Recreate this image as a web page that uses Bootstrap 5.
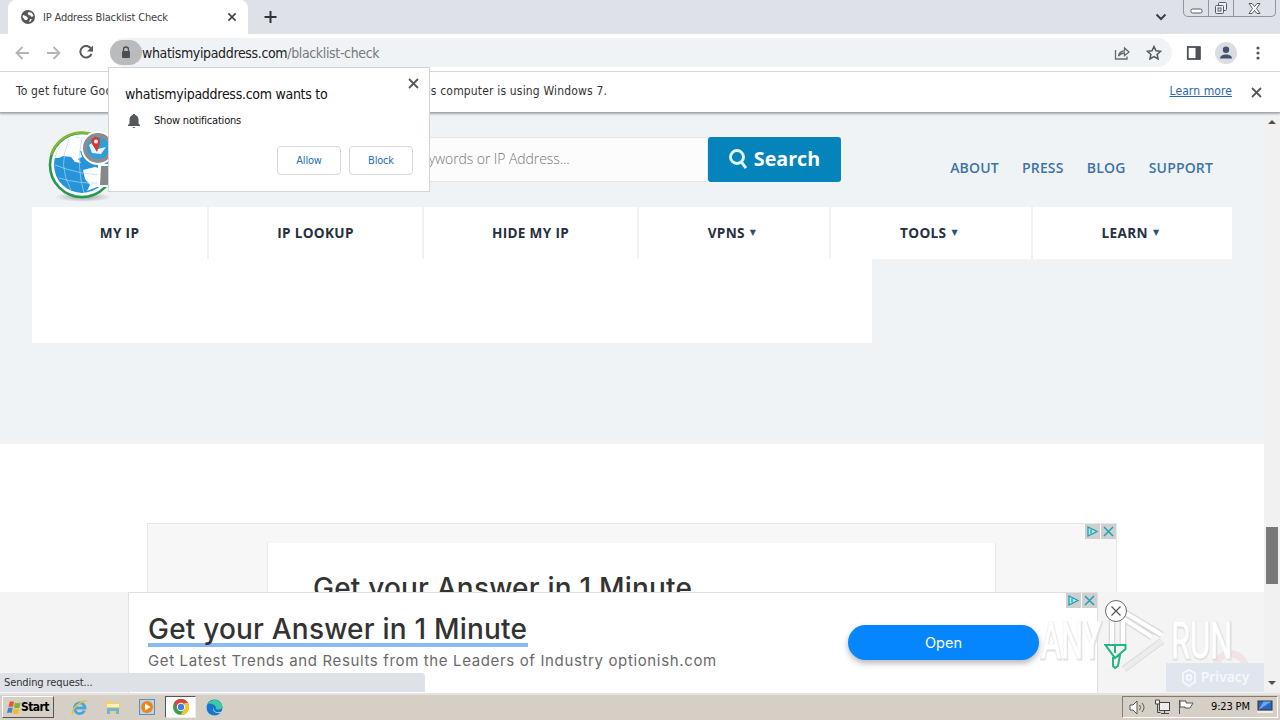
<!DOCTYPE html>
<html lang="en">
<head>
<meta charset="utf-8">
<meta name="viewport" content="width=device-width, initial-scale=1">
<title>IP Address Blacklist Check</title>
<link href="https://cdn.jsdelivr.net/npm/bootstrap@5.3.0/dist/css/bootstrap.min.css" rel="stylesheet">
<style>
body{width:1280px;height:720px;overflow:hidden;font-family:"Open Sans","Noto Sans",sans-serif;background:#fff;color:#222;line-height:1.2}
svg{display:block;flex:none}
a{text-decoration:none}
.chrome-ui{font-family:"DejaVu Sans Condensed","DejaVu Sans",sans-serif;font-stretch:condensed}
.tabstrip{height:34px;background:#dee1e8}
.tab-item{width:240px;height:34px;margin-left:8px;background:#fff;border-radius:8px 8px 0 0;padding:0 11px 0 13px;font-size:11px;color:#3c4043}
.tab-item span{letter-spacing:-.18px;padding-top:1px}
.tab-caret{margin-right:16px}
.caption-btns{width:93px;height:17px;margin-right:4px;border:1px solid #9195a0;border-top:0;border-radius:0 0 5px 5px}
.caption-btns>div{display:flex;justify-content:center;align-items:center;border-right:1px solid #9195a0}
.caption-btns>div:last-child{border:0}
.toolbar-row{height:38px;border-bottom:1px solid #d8dadd}
.omnibox{height:29px;width:1062px;background:#f0f3f5;border-radius:15px;margin-left:16px;font-size:14px;color:#77797d}
.lockchip{width:32px;height:25px;background:#b9bbbd;border-radius:13px}
.omnibox b{font-weight:400;color:#202124}
.omnibox .addr{letter-spacing:-.35px;padding-top:1px}
.infobar{height:41px;border-bottom:1px solid #a5a9ad;box-shadow:0 1px 2px #a5a9ad;position:relative;background:#fff;font-size:12px;color:#333;padding:0 18px 2px 16px}
.infobar .msg{letter-spacing:.17px}
.infobar a{color:#2a65b5;text-decoration:underline;letter-spacing:.1px}
.viewport{height:580px}
.page-area{width:1264px;height:580px;background:#fff;overflow:hidden}
.page-top{height:331px;background:#f0f3f5}
.site-head{height:94px;padding:0 51px 2px 47px}
.site-logo{margin-top:13px}
.search-box{width:393px;height:45px;margin-left:200px;background:#fcfcfc;border:1px solid #e4e6e8;font-size:14px;color:#77797b;font-weight:300;letter-spacing:-.08px}
.search-box span{margin-left:60px}
.search-btn{width:133px;height:45px;background:#0484bb;border-radius:3px;color:#fff;font-weight:700;font-size:19.7px}
.site-links{font-size:14px;font-weight:600;gap:23.300px;letter-spacing:.15px;padding-top:18px}
.site-links a{color:#3f73a5}
.site-menu{width:1200px;height:52px;margin-left:32px;background:#fff;font-size:13.600px;font-weight:700;color:#26303f;letter-spacing:.32px}
.site-menu>div{border-right:2px solid #f0f2f4;display:flex;align-items:center;justify-content:center}
.site-menu>div:last-child{border:0}
.site-menu i{font-style:normal;font-size:8px;color:#2e536f;margin:0 4px 0 5px;font-family:"DejaVu Sans",sans-serif}
.site-panel{width:840px;height:84px;margin-left:32px;background:#fff}
.ad-one{width:970px;height:100px;margin:79px 0 0 147px;background:#f7f7f7;border:1px solid #e6e6e6}
.ad-one-card{width:729px;height:90px;margin:18px 0 0 119px;background:#fff;border:1px solid #e9e9e9;border-top-color:#f4f4f4;padding:28px 0 0 45px}
.ad-title{font-family:"Inter","Lato",sans-serif;font-size:28px;font-weight:500;color:#333;line-height:34px;letter-spacing:.2px;white-space:nowrap}
.ad-marks{top:0;right:0;gap:1px}
.ad-marks svg{background:#cfcfcf}
.ad-two{left:0;top:592px;width:1264px;height:101px;background:#f4f4f4}
.ad-two-card{width:970px;height:101px;margin-left:128px;background:#fff;border:1px solid #e0e0e0;border-bottom:0;padding:20px 0 0 19px}
.ad-two .ad-title{border-bottom:4px solid #8abaf2;line-height:33px;height:34px;width:380px}
.ad-sub{font-family:"Inter",sans-serif;font-size:15px;color:#6a6a6a;line-height:20px;margin-top:4px;letter-spacing:.64px}
.open-btn{left:719px;top:32px;width:191px;height:35px;border-radius:18px;background:#0586fe;color:#fff;font-family:"Inter",sans-serif;font-size:14.500px;box-shadow:0 3px 6px rgba(0,0,0,.3)}
.scroll-col{width:16px;background:#f1f1f1;padding:6px 0 7px}
.scroll-thumb{width:12px;height:57px;background:#797979;margin-bottom:97px}
.perm-pop{left:108px;top:67px;width:322px;height:125px;background:#fff;border:1px solid #d2d4d6;color:#111}
.perm-pop .title-line{font-size:14px;letter-spacing:-.28px;padding:18px 0 0 16px;line-height:17px}
.perm-pop .perm-line{font-size:11px;padding:10px 0 0 18px;letter-spacing:-.2px}
.perm-btn{width:64px;height:29px;border:1px solid #d5d8dc;border-radius:4px;color:#2070ba;font-size:11px;letter-spacing:-.2px}
.status-bub{left:0;top:673px;width:425px;height:19px;background:#dee1e8;border-radius:0 4px 0 0;font-size:11px;padding:1px 0 0 4px;color:#333;letter-spacing:-.1px}
.taskbar-row{height:27px;background:#d6cfc6;border-top:2px solid #e6e3de;padding:0 2px 1px 2px}
.start-btn{width:52px;height:22px;background:#d6cfc6;border:1px solid #fff;border-right-color:#555;border-bottom-color:#555;font-size:12px;font-weight:700;color:#000;letter-spacing:-.6px}
.task-active{width:31px;height:22px;background:#fff;border:1px solid #555;border-right-color:#eee;border-bottom-color:#eee}
.tray-box{width:156px;height:22px;border:1px solid #807c76;border-right-color:#fff;border-bottom-color:#fff;font-size:11px;color:#000}
.wmark{left:1040px;top:608px;width:210px;height:66px}
.privacy{left:1166px;top:663px;width:98px;height:29px;background:#dfe6ee;color:#f7f9fb;font-size:14px;font-weight:600}
</style>
</head>
<body class="position-relative">
<div class="tabstrip chrome-ui d-flex">
  <div class="tab-item d-flex align-items-center">
    <svg width="14" height="14" viewBox="0 0 14 14"><circle cx="7" cy="7" r="7" fill="#55585c"/><path d="M2 5l3 1 2 2-1 2H4L1.500 7zM8 2l3 1 1.500 3-2 1-1-1.500-2-.5-1-2zM9 9l2 .3-1.500 2.200L8 12z" fill="#fff"/></svg>
    <span class="ms-2 flex-grow-1">IP Address Blacklist Check</span>
    <svg width="10" height="10" viewBox="0 0 11 10" stroke="#3c4043" stroke-width="1.700"><path d="M1.500 1l8 8M9.500 1l-8 8"/></svg>
  </div>
  <svg class="ms-3 mt-2" width="13" height="17" viewBox="0 0 13 17" stroke="#333" stroke-width="2"><path d="M6.500 3v12M.5 9h12"/></svg>
  <svg class="tab-caret ms-auto" width="12" height="34" viewBox="0 0 12 34" fill="none" stroke="#3c4043" stroke-width="2"><path d="M1.500 14.500l4.500 4.500 4.500-4.500"/></svg>
  <div class="caption-btns d-flex">
    <div style="width:25px"><svg width="13" height="14"><rect x="1" y="8" width="11" height="4" rx="1.500" fill="#fff" stroke="#555b66"/></svg></div>
    <div style="width:25px"><svg width="14" height="14" fill="#eee" stroke="#555b66"><rect x="4.500" y="1.500" width="8" height="8" rx="1"/><rect x="1.500" y="4.500" width="8" height="8" rx="1"/><rect x="4" y="7" width="3" height="3"/></svg></div>
    <div class="flex-grow-1"><svg width="13" height="13" fill="#fff" stroke="#555b66"><path d="M1 1.500h3l2.500 3 2.500-3h3L8.500 6.500 12 11.500H9L6.500 8.500 4 11.500H1l3.500-5z"/></svg></div>
  </div>
</div>
<div class="toolbar-row chrome-ui d-flex align-items-center">
  <svg style="margin-left:15px" width="14" height="14" fill="none" stroke="#b3b5b8" stroke-width="1.800"><path d="M14 7H1.500M7.500 1l-6 6 6 6"/></svg>
  <svg style="margin-left:18px" width="14" height="14" fill="none" stroke="#b3b5b8" stroke-width="1.800"><path d="M0 7h12.500M6.500 1l6 6-6 6"/></svg>
  <svg style="margin-left:18px" width="15" height="15" fill="none" stroke="#55585c" stroke-width="2"><path d="M12 3.500A5.800 5.800 0 1 0 12.500 9"/><path d="M14 .5v6H8z" fill="#55585c" stroke="none"/></svg>
  <div class="omnibox d-flex align-items-center">
    <div class="lockchip d-flex align-items-center justify-content-center"><svg width="10" height="13"><rect x="1" y="5" width="8" height="7" rx="1" fill="#4c4f52"/><path d="M2.500 5V3.500a2.500 2.500 0 0 1 5 0V5" fill="none" stroke="#4c4f52" stroke-width="1.300"/></svg></div>
    <span class="addr flex-grow-1"><b>whatismyipaddress.com</b>/blacklist-check</span>
    <svg width="16" height="14" fill="none" stroke="#66696d" stroke-width="1.300"><path d="M1.500 4v9h11.500v-2.500M4.500 10c.5-3.500 2.500-5 6-5.200V2L15 6l-4.500 3.700V7C8 7 6 8 4.500 10z"/></svg>
    <svg style="margin:0 10px 0 16px" width="16" height="15" fill="none" stroke="#55585c" stroke-width="1.500"><path d="M8 1.500l2 4.300 4.500.5-3.400 3.100 1 4.600L8 11.700 3.900 14l1-4.600L1.500 6.300l4.500-.5z"/></svg>
  </div>
  <svg style="margin-left:14px" width="16" height="14"><rect x="1.800" y="1" width="12" height="12" fill="#fff" stroke="#4d5054" stroke-width="1.800"/><path d="M9.500 1h5v12h-5z" fill="#4d5054"/></svg>
  <svg style="margin-left:13px" width="22" height="22"><circle cx="11" cy="11" r="11" fill="#d9dce3"/><circle cx="11" cy="7.800" r="3.200" fill="#46506c"/><path d="M5 16.500c0-5.300 12-5.300 12 0z" fill="#46506c"/></svg>
  <svg style="margin-left:19px" width="4" height="14" fill="#55585c"><circle cx="2" cy="2" r="1.600"/><circle cx="2" cy="7" r="1.600"/><circle cx="2" cy="12" r="1.600"/></svg>
</div>
<div class="infobar chrome-ui d-flex align-items-center">
  <span class="msg flex-grow-1">To get future Google Chrome updates, you'll need Windows 10 or later. This computer is using Windows 7.</span>
  <a href="#">Learn more</a>
  <svg style="margin:2px 0 0 19px" width="11" height="11" stroke="#55585c" stroke-width="1.800"><path d="M1 1l9 9M10 1l-9 9"/></svg>
</div>
<div class="viewport d-flex">
  <div class="page-area">
    <div class="page-top">
      <div class="site-head d-flex align-items-center">
        <svg class="site-logo" width="68" height="72" viewBox="0 0 68 72">
          <defs><radialGradient id="shade"><stop offset="0" stop-color="#9da0a1"/><stop offset="1" stop-color="#f0f3f5"/></radialGradient></defs>
          <ellipse cx="36" cy="67" rx="28" ry="5" fill="url(#shade)"/>
          <circle cx="35" cy="35" r="32" fill="#fff" stroke="#25984f" stroke-width="2.600"/>
          <path d="M4 25A32 32 0 0 1 62 18" fill="none" stroke="#85b63a" stroke-width="2.600"/>
          <circle cx="35" cy="35" r="28" fill="#2793d8"/>
          <path d="M8 28C13 12 23 7 36 7c7 0 10 3 9 6l-5 7-7 1 2 6-4 2 3 4-6-1-4-5-8-1-4 2zM36 40l12-3 12 4-5 14-15 6 3-6-5-6z" fill="#fff"/>
          <path d="M8 35q25 10 50 10M12 48q20 6 42 5M22 10q-12 25 2 50M35 7q-6 30 2 56" stroke="#a5d5f2" stroke-width=".7" fill="none"/>
          <circle cx="51" cy="18" r="17" fill="#fff"/><circle cx="51" cy="18" r="13" fill="#2e9fd8" stroke="#8c8c90" stroke-width="4"/>
          <path d="M42 15l6-4 3 8 8-2-5 7-9-1z" fill="#e9f5fb"/>
          <path d="M50 22l-5-8a4.500 4.500 0 1 1 8-1z" fill="#d43b30"/><circle cx="49" cy="11.500" r="2" fill="#fff"/>
          <path d="M51 34h10v23H50z" fill="#fff"/><path d="M54 36h8v19h-9z" fill="#87888a"/>
        </svg>
        <div class="search-box d-flex align-items-center"><span>Enter Keywords or IP Address...</span></div>
        <div class="search-btn d-flex align-items-center justify-content-center">
          <svg style="margin-right:7px" width="18" height="21" fill="none" stroke="#e2f6ff" stroke-width="2.900"><circle cx="8" cy="8" r="6.500"/><path d="M12 12.500l5 6.500"/></svg>Search
        </div>
        <div class="site-links d-flex ms-auto"><a href="#">ABOUT</a><a href="#">PRESS</a><a href="#">BLOG</a><a href="#">SUPPORT</a></div>
      </div>
      <div class="site-menu d-flex">
        <div style="width:177px">MY IP</div><div style="width:215px">IP LOOKUP</div><div style="width:215px">HIDE MY IP</div><div style="width:192px">VPNS<i>▼</i></div><div style="width:202px">TOOLS<i>▼</i></div><div style="width:199px">LEARN<i>▼</i></div>
      </div>
      <div class="site-panel"></div>
    </div>
    <div class="ad-one position-relative">
      <div class="ad-marks position-absolute d-flex">
        <svg width="15" height="15" fill="#bfe3e8" stroke="#18a5b5" stroke-width="1.300"><path d="M3 3v9l9-4.500zM6 5.500v4"/></svg>
        <svg width="15" height="15" stroke="#18a5b5" stroke-width="1.500"><path d="M3 3l9 9M12 3l-9 9"/></svg>
      </div>
      <div class="ad-one-card"><div class="ad-title">Get your Answer in 1 Minute</div></div>
    </div>
  </div>
  <div class="scroll-col chrome-ui d-flex flex-column align-items-center">
    <svg width="8" height="5"><path d="M0 5l4-4 4 4z" fill="#505050"/></svg>
    <div class="scroll-thumb mt-auto"></div>
    <svg width="8" height="5"><path d="M0 0l4 4 4-4z" fill="#505050"/></svg>
  </div>
</div>
<div class="taskbar-row chrome-ui d-flex align-items-center">
  <div class="start-btn d-flex align-items-center">
    <svg class="ms-1" width="14" height="15" viewBox="0 0 14 15"><path d="M2.500 2Q5 .5 7 2L6 7Q4 6 1.500 7z" fill="#e5592c"/><path d="M8 2.500q3 1 5.500 0L12.500 7.500q-3 1-5.500 0z" fill="#7cb33a"/><path d="M1.200 8q2.500-1 4.500 0l-1 5Q3 12 0 13z" fill="#3f84d0"/><path d="M6.800 8.500q2.500 1 5.500 0l-1 5q-3 1-5.500 0z" fill="#f3b927"/></svg>
    <span>Start</span>
  </div>
  <svg style="margin-left:17px" width="17" height="17"><path d="M13.500 11.500A5.300 5.300 0 1 1 14 9H5" fill="none" stroke="#45a7e0" stroke-width="2.800"/><path d="M2 15.500C-1 12 9 1 16 2" stroke="#e8c13f" stroke-width="1.500" fill="none"/></svg>
  <svg style="margin-left:17px" width="16" height="16"><path d="M1 2h6l1 2h7v10H1z" fill="#efcf72"/><path d="M2 5h12v3H2z" fill="#fff3bd"/><path d="M2 15V9h12v6h-3v-3H5v3z" fill="#6eb4dc"/></svg>
  <svg style="margin-left:18px" width="16" height="16"><rect x=".5" y=".5" width="15" height="15" fill="#b9d4e8" stroke="#5d90b9"/><circle cx="8" cy="8" r="6" fill="#f08418"/><path d="M6 4.500v7L11.500 8z" fill="#fff"/></svg>
  <div class="task-active d-flex align-items-center justify-content-center" style="margin-left:10px">
    <svg width="16" height="16" viewBox="0 0 16 16"><circle cx="8" cy="8" r="8" fill="#3aa04e"/><path d="M1 4a8 8 0 0 1 14 0H8L4.500 10z" fill="#de4436"/><path d="M15 4a8 8 0 0 1-7.500 12l4-6V4z" fill="#f8c727"/><circle cx="8" cy="8" r="4.200" fill="#fff"/><circle cx="8" cy="8" r="3.200" fill="#3f7fe8"/></svg>
  </div>
  <svg style="margin-left:10px" width="17" height="17" viewBox="0 0 17 17"><circle cx="8.500" cy="8.500" r="8" fill="#1478cf"/><path d="M2 5C5-1 15 0 16.500 7c0 4-4 4-6.500 3 1-3-3-6-8-5z" fill="#3ccba0"/><path d="M7.500 9c0 4 4 5 8.500 3.500l-1 1.500c-5 1-9-2-7.500-5z" fill="#d6cfc6"/></svg>
  <div class="tray-box ms-auto d-flex align-items-center">
    <svg style="margin-left:6px" width="17" height="15" fill="#fff" stroke="#555"><path d="M1 5h3l4-4v13l-4-4H1z"/><path d="M10.500 5q2 2.500 0 5M13 3q4 4.500 0 9" fill="none"/></svg>
    <svg style="margin-left:8px" width="16" height="16" fill="#eee" stroke="#444"><rect x="5.500" y="3.500" width="10" height="8"/><path d="M1.500 1v4h4V1z"/><path d="M3.500 5v8.500h3M7 14.500h8M10.500 12v2" fill="none"/></svg>
    <svg style="margin-left:8px" width="16" height="16" fill="#fff" stroke="#555"><path d="M1.500 1v14M2 2h6v2h7l-3 5H7V8H2z"/></svg>
    <span style="margin-left:17px;letter-spacing:-.15px">9:23 PM</span>
    <svg class="ms-auto me-1" width="16" height="14"><rect x="1" y="1" width="14" height="9" fill="#2866c4" stroke="#333"/><path d="M1.500 10L14.500 1.500h-8z" fill="#6fa5e8"/><path d="M0 12h16" stroke="#eee" stroke-width="2"/></svg>
  </div>
</div>

<div class="ad-two position-absolute">
  <div class="ad-two-card position-relative">
    <div class="ad-title">Get your Answer in 1 Minute</div>
    <div class="ad-sub">Get Latest Trends and Results from the Leaders of Industry optionish.com</div>
    <div class="open-btn position-absolute d-flex align-items-center justify-content-center">Open</div>
    <div class="ad-marks position-absolute d-flex">
      <svg width="15" height="15" fill="#bfe3e8" stroke="#18a5b5" stroke-width="1.300"><path d="M3 3v9l9-4.500zM6 5.500v4"/></svg>
      <svg width="15" height="15" stroke="#18a5b5" stroke-width="1.500"><path d="M3 3l9 9M12 3l-9 9"/></svg>
    </div>
  </div>
</div>
<svg class="position-absolute" style="left:1210px;top:641px" width="40" height="30"><path d="M6 24a15 15 0 0 1 29 0" fill="none" stroke="#f4e3e3" stroke-width="7"/></svg>
<div class="privacy position-absolute d-flex align-items-center justify-content-center">
  <svg class="me-1" width="16" height="18" fill="none" stroke="#f7f9fb" stroke-width="1.800"><path d="M8 1l6 3v9l-6 4-6-4V4z"/><circle cx="8" cy="8.500" r="2.500"/></svg>Privacy
</div>
<svg class="wmark position-absolute" viewBox="0 0 210 66" font-family="Roboto, sans-serif" font-size="50">
  <g fill="#dcdcdc" stroke="#dcdcdc" stroke-width="3" opacity=".8"><text x="1" y="51" textLength="61" lengthAdjust="spacingAndGlyphs">ANY</text><text x="131" y="51" textLength="62" lengthAdjust="spacingAndGlyphs">RUN</text></g>
  <g fill="#fff" stroke="#fff" stroke-width=".8"><text x="1" y="50" textLength="60" lengthAdjust="spacingAndGlyphs">ANY</text><text x="131" y="50" textLength="61" lengthAdjust="spacingAndGlyphs">RUN</text></g>
  <path d="M72 5v32M83 5v32M84 4l38 23M84 11l28 18M84 61l38-28" stroke="#dcdcdc" stroke-width="7" fill="none"/>
  <path d="M72 5v32M83 5v32M84 4l38 23M84 11l28 18" stroke="#fff" stroke-width="4" fill="none"/><path d="M84 61l38-28" stroke="#ececec" stroke-width="5"/>
</svg>
<svg class="position-absolute" style="left:1104px;top:599px" width="24" height="72" fill="none"><circle cx="12" cy="12" r="10.500" fill="#fff" stroke="#6c6c6c"/><path d="M7.500 7.500l9 9M16.500 7.500l-9 9" stroke="#555" stroke-width="1.200"/><path d="M1.500 46h20v4L11 59zM11 46v8M12 58l4-2-2 11-3 2-2-2v-9" stroke="#23b584" stroke-width="2"/></svg>
<div class="status-bub chrome-ui position-absolute d-flex align-items-center">Sending request...</div>
<div class="perm-pop chrome-ui position-absolute">
  <svg class="position-absolute" style="left:299px;top:10px" width="11" height="11" stroke="#55585c" stroke-width="1.800"><path d="M1 1l9 9M10 1l-9 9"/></svg>
  <div class="title-line">whatismyipaddress.com wants to</div>
  <div class="perm-line d-flex align-items-center"><svg style="margin-right:13px" width="14" height="16" fill="#55585c"><path d="M1 13v-1l1.500-1.500V6.500C2.500 4 4 2.500 6 2V1h2v1c2 .5 3.500 2 3.500 4.500v4L13 12v1zM5.500 14h3q-1.500 2-3 0z"/></svg>Show notifications</div>
  <div class="d-flex gap-2 justify-content-end" style="padding:17px 16px 0 0"><div class="perm-btn d-flex align-items-center justify-content-center">Allow</div><div class="perm-btn d-flex align-items-center justify-content-center">Block</div></div>
</div>
<script src="https://cdn.jsdelivr.net/npm/bootstrap@5.3.0/dist/js/bootstrap.bundle.min.js"></script>
</body>
</html>
